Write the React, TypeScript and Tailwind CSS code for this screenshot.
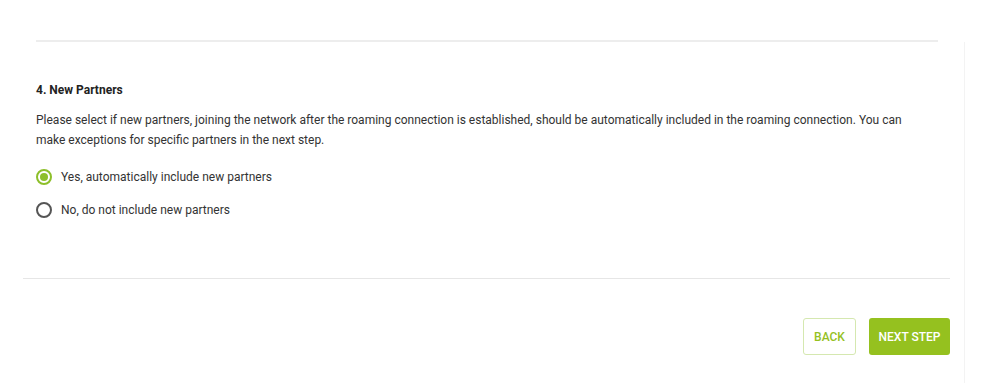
import React from "react";

function Radio({ checked }: { checked: boolean }) {
  return (
    <span
      className={
        "flex h-[16px] w-[16px] shrink-0 items-center justify-center rounded-full border-2 " +
        (checked ? "border-[#8dbf2a]" : "border-[#555555]")
      }
    >
      {checked && <span className="h-[8px] w-[8px] rounded-full bg-[#8dbf2a]" />}
    </span>
  );
}

export default function App() {
  return (
    <div
      className="h-[383px] w-[993px] bg-white text-[#212121]"
      style={{ fontFamily: "Roboto, 'Liberation Sans', sans-serif" }}
    >
      <div className="flex h-full w-[965px] flex-col">
        <div className="ml-[36px] mr-[27px] mt-[40px] h-[2px] bg-[#ededed]" />
        <div className="flex flex-1 flex-col border-r border-[#f3f3f3]">
          <div className="px-[36px] pt-[40px]">
            <h3 className="text-[12px] font-bold leading-[16px] text-[#222]">4. New Partners</h3>
            <p className="mt-[12px] text-[12px] leading-[20px] text-[#333]">
              Please select if new partners, joining the network after the roaming connection is established, should be automatically included in the roaming connection. You can make exceptions for specific partners in the next step.
            </p>
            <div className="mt-[19px] flex flex-col gap-[17px]">
              <label className="flex items-center gap-[9px] text-[12px] leading-[16px] text-[#333]">
                <Radio checked={true} />
                <span>Yes, automatically include new partners</span>
              </label>
              <label className="flex items-center gap-[9px] text-[12px] leading-[16px] text-[#333]">
                <Radio checked={false} />
                <span>No, do not include new partners</span>
              </label>
            </div>
          </div>
          <div className="ml-[23px] mr-[14px] mt-[60px] h-[1px] bg-[#e6e6e6]" />
          <div className="mr-[14px] mt-[39px] flex justify-end gap-[13px]">
            <button className="h-[37px] w-[53px] rounded-[3px] border border-[#d5e8b0] bg-white text-[12px] font-medium text-[#95c11f]">
              BACK
            </button>
            <button className="h-[37px] w-[81px] rounded-[3px] bg-[#95c11f] text-[12px] font-medium text-white">
              NEXT STEP
            </button>
          </div>
        </div>
      </div>
    </div>
  );
}
